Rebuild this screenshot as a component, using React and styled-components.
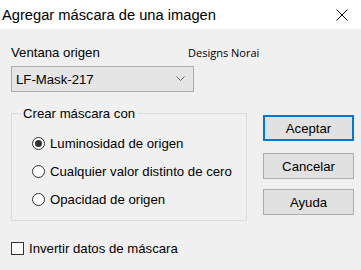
import React, { useState } from 'react';
import styled, { createGlobalStyle } from 'styled-components';

const GlobalStyle = createGlobalStyle`
  body {
    margin: 0;
    background: #f0f0f0;
  }
`;

const Dialog = styled.div`
  width: 361px;
  height: 270px;
  background: #f0f0f0;
  font-family: "Liberation Sans", Arial, sans-serif;
  font-size: 13.2px;
  color: #000;
  overflow: hidden;
`;

const TitleBar = styled.div`
  height: 29px;
  background: #fff;
  display: flex;
  align-items: center;
  justify-content: space-between;
  padding: 0 13px 0 2px;
`;

const Title = styled.span`
  font-family: "Liberation Sans", Arial, sans-serif;
  font-size: 14.7px;
  color: #000;
  margin-top: 1px;
`;

const Body = styled.div`
  padding: 16px 7px 0 11px;
`;

const TopRow = styled.div`
  display: flex;
  align-items: flex-start;
`;

const Field = styled.div`
  display: flex;
  flex-direction: column;
  width: 183px;
`;

const Label = styled.span`
  line-height: 15px;
  height: 15px;
`;

const Select = styled.div`
  margin-top: 6px;
  height: 26px;
  box-sizing: border-box;
  border: 1px solid #adadad;
  background: #e5e5e5;
  display: flex;
  align-items: center;
  justify-content: space-between;
  padding: 0 8px 0 4px;
`;

const Brand = styled.span`
  font-family: "Open Sans", "Noto Sans", sans-serif;
  font-size: 11px;
  margin-left: -6px;
  margin-top: 1px;
  line-height: 14px;
`;

const MainRow = styled.div`
  display: flex;
  margin-top: 21px;
  align-items: flex-start;
`;

const GroupBox = styled.div`
  width: 236px;
  height: 108px;
  box-sizing: border-box;
  border: 1px solid #dcdcdc;
  padding-left: 20px;
`;

const Legend = styled.span`
  display: block;
  width: fit-content;
  margin: -8px 0 0 -11px;
  padding: 0 3px 0 2px;
  line-height: 15px;
  background: #f0f0f0;
`;

const RadioList = styled.div`
  display: flex;
  flex-direction: column;
  gap: 15px;
  margin-top: 16px;
`;

const RadioRow = styled.label`
  display: flex;
  align-items: center;
  gap: 5px;
  height: 13px;
  cursor: default;
`;

const RadioCircle = styled.span`
  width: 13px;
  height: 13px;
  box-sizing: border-box;
  border-radius: 50%;
  border: 1px solid #333;
  background: #fff;
  display: flex;
  align-items: center;
  justify-content: center;

  &::after {
    content: '';
    width: 7px;
    height: 7px;
    border-radius: 50%;
    background: ${(p) => (p.$checked ? '#333' : 'transparent')};
  }
`;

const Buttons = styled.div`
  display: flex;
  flex-direction: column;
  margin-left: 16px;
  margin-top: 2px;
`;

const Button = styled.button`
  width: 91px;
  height: 26px;
  box-sizing: border-box;
  margin-top: ${(p) => p.$gap || 0}px;
  border: ${(p) => (p.$primary ? '2px solid #0078d7' : '1px solid #adadad')};
  background: #e1e1e1;
  font-family: "Liberation Sans", Arial, sans-serif;
  font-size: 13.2px;
  color: #000;
  padding: 0;
`;

const CheckRow = styled.label`
  display: flex;
  align-items: center;
  gap: 5px;
  margin-top: 21px;
  height: 13px;
`;

const CheckBox = styled.span`
  width: 13px;
  height: 13px;
  box-sizing: border-box;
  border: 1px solid #333;
  background: #fff;
`;

const options = [
  'Luminosidad de origen',
  'Cualquier valor distinto de cero',
  'Opacidad de origen',
];

function App() {
  const [mode, setMode] = useState(0);

  return (
    <Dialog>
      <GlobalStyle />
      <TitleBar>
        <Title>Agregar máscara de una imagen</Title>
        <svg width="12" height="12" viewBox="0 0 12 12">
          <path d="M0.5 0.5 L11.5 11.5 M11.5 0.5 L0.5 11.5" stroke="#000" strokeWidth="1" />
        </svg>
      </TitleBar>
      <Body>
        <TopRow>
          <Field>
            <Label>Ventana origen</Label>
            <Select>
              <span>LF-Mask-217</span>
              <svg width="9" height="6" viewBox="0 0 9 6">
                <path d="M0.5 0.5 L4.5 4.5 L8.5 0.5" fill="none" stroke="#666" strokeWidth="1" />
              </svg>
            </Select>
          </Field>
          <Brand>Designs Norai</Brand>
        </TopRow>
        <MainRow>
          <GroupBox>
            <Legend>Crear máscara con</Legend>
            <RadioList>
              {options.map((o, i) => (
                <RadioRow key={o} onClick={() => setMode(i)}>
                  <RadioCircle $checked={mode === i} />
                  {o}
                </RadioRow>
              ))}
            </RadioList>
          </GroupBox>
          <Buttons>
            <Button $primary>Aceptar</Button>
            <Button $gap={12}>Cancelar</Button>
            <Button $gap={10}>Ayuda</Button>
          </Buttons>
        </MainRow>
        <CheckRow>
          <CheckBox />
          Invertir datos de máscara
        </CheckRow>
      </Body>
    </Dialog>
  );
}

export default App;
